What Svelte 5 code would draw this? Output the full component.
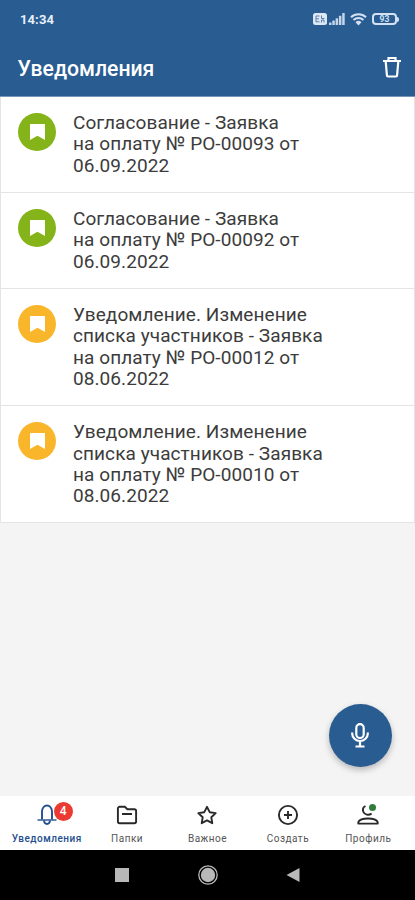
<script lang="ts">
    const notifications = [
        { kind: "approval", lines: ["Согласование - Заявка", "на оплату № РО-00093 от", "06.09.2022"] },
        { kind: "approval", lines: ["Согласование - Заявка", "на оплату № РО-00092 от", "06.09.2022"] },
        {
            kind: "notice",
            lines: ["Уведомление. Изменение", "списка участников - Заявка", "на оплату № РО-00012 от", "08.06.2022"],
        },
        {
            kind: "notice",
            lines: ["Уведомление. Изменение", "списка участников - Заявка", "на оплату № РО-00010 от", "08.06.2022"],
        },
    ];

    const tabs = [
        { id: "bell", label: "Уведомления", badge: 4 },
        { id: "folder", label: "Папки" },
        { id: "star", label: "Важное" },
        { id: "create", label: "Создать" },
        { id: "profile", label: "Профиль" },
    ];

    let active = $state("bell");
</script>

<div class="screen">
    <header class="header">
        <div class="status">
            <span class="time">14:34</span>
            <div class="indicators">
                <svg class="sim" width="14" height="12" viewBox="0 0 14 12">
                    <rect width="14" height="12" rx="2.5" fill="#dce8f6" />
                    <path d="M3 3h3.5M3 5.8h3M3 8.8h3.5M3 3v6M8.5 2.5v3h3M8.5 9.5V7h2.5v2.5" fill="none" stroke="#5980ac" stroke-width="1" />
                </svg>
                <svg class="signal" width="16" height="12" viewBox="0 0 16 12" fill="#c5d6eb">
                    <rect x="0" y="9.5" width="2.5" height="2.5" rx=".6" />
                    <rect x="3.3" y="7.5" width="2.5" height="4.5" rx=".6" />
                    <rect x="6.6" y="5.2" width="2.5" height="6.8" rx=".6" />
                    <rect x="9.9" y="2.8" width="2.5" height="9.2" rx=".6" />
                    <rect x="13.2" y="0" width="2.5" height="12" rx=".6" />
                </svg>
                <svg class="wifi" width="17" height="13" viewBox="0 0 17 13" fill="none" stroke="#d3e1f2" stroke-width="2">
                    <path d="M1 4.2a11 11 0 0 1 15 0M3.5 7a7.5 7.5 0 0 1 10 0" />
                    <path d="M5.5 9.2a4.5 4.5 0 0 1 6 0l-3 3.3z" fill="#d3e1f2" stroke="none" />
                </svg>
                <span class="battery">93</span>
            </div>
        </div>
        <div class="bar">
            <h1 class="title">Уведомления</h1>
            <button class="trash" aria-label="Удалить">
                <svg width="20" height="22" viewBox="0 0 20 22" fill="none" stroke="#fff" stroke-width="2.2">
                    <path d="M1 5h18M6.5 4.500V2h7v2.500" />
                    <path d="M3.7 5.5l1.2 13.7a1.3 1.3 0 0 0 1.3 1.3h7.6a1.3 1.3 0 0 0 1.3-1.3L16.3 5.5" />
                </svg>
            </button>
        </div>
    </header>

    <main class="content">
        <ul class="list">
            {#each notifications as item}
                <li class="card">
                    <span class="mark mark--{item.kind}">
                        <svg width="15" height="16" viewBox="0 0 15 16" fill="#fff">
                            <path d="M.6 0h13.8a.6.6 0 0 1 .6.6V16l-7.5-4.200L0 16V.6A.6.6 0 0 1 .6 0z" />
                        </svg>
                    </span>
                    <p class="text">
                        {#each item.lines as line}
                            <span class="line">{line}</span>
                        {/each}
                    </p>
                </li>
            {/each}
        </ul>

        <button class="voice" aria-label="Голосовой ввод">
            <svg width="19" height="25" viewBox="0 0 19 25" fill="none" stroke="#fff" stroke-width="2.2">
                <rect x="5.3" y="1.2" width="7.4" height="13.8" rx="3.7" />
                <path d="M1.2 9.5v1a7.8 7.5 0 0 0 15.6 0v-1M9 18v5M4.5 23.5h9" />
            </svg>
        </button>
    </main>

    <nav class="tabs">
        {#each tabs as tab}
            <button class="tab" class:tab--active={active === tab.id} onclick={() => (active = tab.id)}>
                <span class="tab-icon">
                    <svg width="22" height="22" viewBox="0 0 22 22" fill="none" stroke="currentColor" stroke-width="1.9">
                        {#if tab.id === "bell"}
                            <path d="M6 15.5V7.5a5 6 0 0 1 10 0v8M8 16.5c.4 4.7 5.6 4.7 6 0" />
                            <path d="M1.5 16h19" stroke-width="1.4" />
                        {:else if tab.id === "folder"}
                            <path d="M1.9 4.5a1.7 1.7 0 0 1 1.7-1.7h5.2l2.6 2.4h7a1.7 1.7 0 0 1 1.7 1.7v10.6a1.7 1.7 0 0 1-1.7 1.7H3.6a1.7 1.7 0 0 1-1.7-1.7zM6 10h10" />
                        {:else if tab.id === "star"}
                            <path d="M11 2.8l2.7 5.4 6 .9-4.4 4.2 1 5.9-5.3-2.8-5.3 2.8 1-5.9-4.4-4.2 6-.9z" stroke-linejoin="round" />
                        {:else if tab.id === "create"}
                            <circle cx="11" cy="11" r="9.1" />
                            <path d="M11 7v8M7 11h8" />
                        {:else}
                            <path d="M8.5 2C6 3.2 5.5 5.8 6.4 8c1.2 2.8 5 3.6 8.2 1.6" />
                            <path d="M1.3 19.6v-1.5c1.2-2.6 5-3.6 9.7-3.6s8.5 1 9.7 3.6v1.5z" stroke-linejoin="round" />
                        {/if}
                    </svg>
                    {#if tab.badge}
                        <span class="badge">{tab.badge}</span>
                    {/if}
                    {#if tab.id === "profile"}
                        <span class="online"></span>
                    {/if}
                </span>
                <span class="tab-label">{tab.label}</span>
            </button>
        {/each}
    </nav>

    <div class="system">
        <svg width="20" height="20" viewBox="0 0 20 20"><rect x="3" y="3" width="14" height="14" fill="#b8b8b8" /></svg>
        <svg width="20" height="20" viewBox="0 0 20 20">
            <circle cx="10" cy="10" r="9.2" fill="none" stroke="#b8b8b8" stroke-width="1.3" />
            <circle cx="10" cy="10" r="7.2" fill="#b8b8b8" />
        </svg>
        <svg width="20" height="20" viewBox="0 0 20 20"><path d="M3.5 10l13-7v14z" fill="#b8b8b8" /></svg>
    </div>
</div>

<style>
    :global(body) {
        font-family: Roboto, "Noto Sans", sans-serif;
    }

    button {
        padding: 0;
        border: 0;
        background: none;
        font: inherit;
    }

    svg {
        display: block;
    }

    .screen {
        display: flex;
        flex-direction: column;
        height: 900px;
        overflow: hidden;
        background: #f4f4f4;
    }

    .header {
        flex: none;
        box-sizing: border-box;
        height: 97px;
        background: #295c91;
        border-bottom: 1px solid #7696b9;
        color: #fff;
    }

    .status {
        display: flex;
        align-items: center;
        justify-content: space-between;
        height: 38px;
        padding: 0 16px 0 20px;
    }

    .time {
        font-size: 13px;
        font-weight: 700;
        letter-spacing: 0.1px;
        color: #e7f0fa;
    }

    .indicators {
        display: flex;
        align-items: center;
    }

    .signal {
        margin-left: 2px;
    }

    .wifi {
        margin-left: 5px;
    }

    .battery {
        position: relative;
        box-sizing: border-box;
        width: 25px;
        height: 12px;
        margin: 0 2px 0 5px;
        border: 2px solid #d3e1f2;
        border-radius: 4px;
        font-size: 8.5px;
        font-weight: 700;
        line-height: 8px;
        text-align: center;
        color: #d3e1f2;
    }

    .battery::after {
        content: "";
        position: absolute;
        top: 1.5px;
        right: -4px;
        width: 2px;
        height: 5px;
        border-radius: 0 2px 2px 0;
        background: #d3e1f2;
    }

    .bar {
        display: flex;
        align-items: center;
        justify-content: space-between;
        height: 58px;
        padding: 0 13.5px 0 17.5px;
    }

    .title {
        margin: 3px 0 0;
        font-size: 21.2px;
        font-weight: 500;
    }

    .content {
        position: relative;
        flex: 1;
    }

    .list {
        margin: 0;
        padding: 0;
        list-style: none;
    }

    .card {
        display: flex;
        align-items: flex-start;
        padding: 15.7px 18px 15.7px 17px;
        background: #fff;
        border: solid #e4e4e4;
        border-width: 0 1px 1px;
    }

    .mark {
        display: flex;
        align-items: center;
        justify-content: center;
        flex: none;
        width: 38px;
        height: 38px;
        margin-right: 17px;
        border-radius: 50%;
    }

    .mark--approval {
        background: #84b41a;
    }

    .mark--notice {
        background: #fab62b;
    }

    .text {
        margin: -0.5px 0 0.5px;
        font-size: 19px;
        line-height: 21.2px;
        letter-spacing: 0.08px;
        color: #3c3c3c;
    }

    .line {
        display: block;
        white-space: nowrap;
    }

    .voice {
        position: absolute;
        right: 23px;
        bottom: 29px;
        display: flex;
        align-items: center;
        justify-content: center;
        width: 63px;
        height: 63px;
        border-radius: 50%;
        background: #295c91;
        box-shadow: 0 3px 6px rgba(0, 0, 0, 0.25);
    }

    .tabs {
        flex: none;
        display: grid;
        grid-template-columns: repeat(5, 1fr);
        box-sizing: border-box;
        height: 54px;
        padding: 0 6.5px;
        background: #fff;
    }

    .tab {
        display: flex;
        flex-direction: column;
        align-items: center;
        padding-top: 8px;
        color: #292929;
    }

    .tab--active {
        color: #234f8e;
    }

    .tab-icon {
        position: relative;
    }

    .tab-label {
        margin-top: 6px;
        font-size: 10px;
        line-height: 13px;
        letter-spacing: 0.5px;
        color: #555;
    }

    .tab--active .tab-label {
        font-weight: 500;
        color: #234f8e;
    }

    .badge {
        position: absolute;
        top: -2px;
        left: 18px;
        width: 19px;
        height: 19px;
        border-radius: 50%;
        background: #eb3a31;
        font-size: 12px;
        font-weight: 500;
        line-height: 19px;
        text-align: center;
        color: #fff;
    }

    .online {
        position: absolute;
        top: 0;
        right: 3px;
        width: 7px;
        height: 7px;
        border-radius: 50%;
        background: #2f7d3c;
    }

    .system {
        flex: none;
        display: flex;
        justify-content: center;
        align-items: center;
        gap: 65.5px;
        height: 50px;
        background: #000;
    }
</style>
